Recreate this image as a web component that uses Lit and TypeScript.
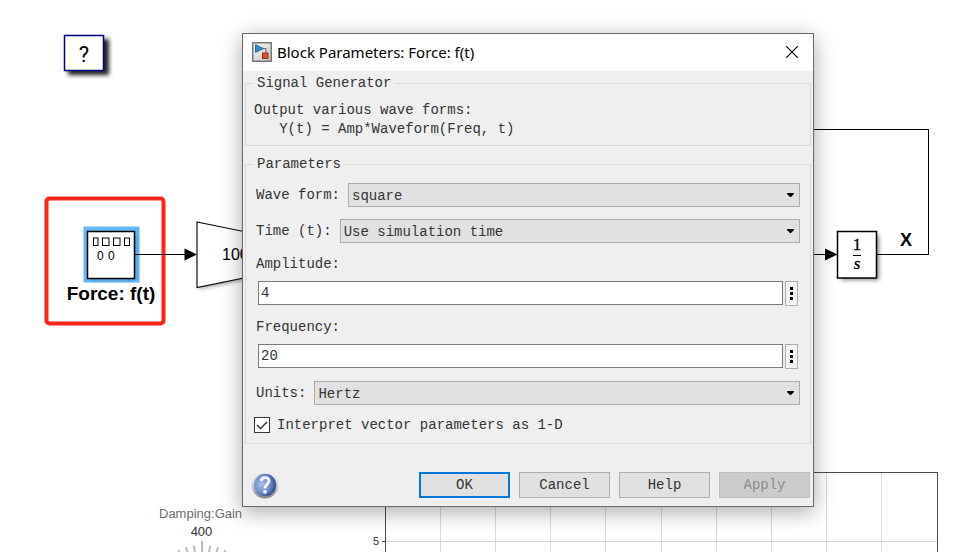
import { LitElement, html, svg, css } from "lit";
import { customElement, property } from "lit/decorators.js";

const GRID_X = [440, 495, 550, 605, 661, 716, 771, 826, 881];
const DIAL_ANGLES = [-24, -16, -8, 0, 8, 16, 24];

@customElement("model-canvas")
class ModelCanvas extends LitElement {
  static styles = css`
    :host {
      display: block;
      overflow: hidden;
    }
    .model {
      display: block;
      width: 100%;
      height: 100%;
      overflow: visible;
      font-family: "Liberation Sans", sans-serif;
    }
    .block {
      fill: #fff;
      stroke: #000;
      stroke-width: 1.5;
    }
    .thin {
      stroke-width: 1.1;
    }
    .wire {
      fill: none;
      stroke: #000;
      stroke-width: 1;
      shape-rendering: crispEdges;
    }
    .glyph {
      fill: none;
      stroke: #000;
      stroke-width: 1;
    }
    .doc {
      fill: #fff;
      stroke: #000080;
      stroke-width: 1.5;
    }
    .selected {
      fill: #63b8f7;
    }
    .callout {
      fill: none;
      stroke: #ff2419;
      stroke-width: 4;
    }
    .name {
      font-size: 18px;
      font-weight: bold;
    }
    .block-name {
      font-size: 19px;
    }
    .query {
      font-size: 22px;
      font-family: Roboto, "Liberation Sans", sans-serif;
    }
    .gain {
      font-size: 16px;
    }
    .zeros {
      font-size: 12px;
    }
    .serif {
      font-family: "Liberation Serif", serif;
      font-size: 17px;
      stroke: #000;
      stroke-width: 0.3;
    }
    .italic {
      font-style: italic;
    }
    .axis {
      fill: none;
      stroke: #4c4c4c;
      shape-rendering: crispEdges;
    }
    .grid {
      stroke: #d9d9d9;
      shape-rendering: crispEdges;
    }
    .tick-text {
      font-size: 11px;
      fill: #333;
    }
    .dial-title {
      font-size: 13px;
      fill: #6e6e6e;
    }
    .dial-value {
      font-size: 13px;
      fill: #333;
    }
    .dial-tick {
      stroke: #bcbcbc;
      stroke-width: 2;
    }
  `;

  render() {
    return html`
      <svg class="model" role="img" aria-label="Simulink model">
        <defs>
          <filter id="blur" x="-30%" y="-30%" width="160%" height="160%">
            <feGaussianBlur stdDeviation="2" />
          </filter>
        </defs>
        <rect x="68" y="39" width="41" height="36" fill="#222" filter="url(#blur)" />
        <rect class="doc" x="64.5" y="35.5" width="39" height="35" />
        <text class="query" x="84" y="62" text-anchor="middle">?</text>

        <rect class="callout" x="46.5" y="198.5" width="117" height="125" rx="3" />
        <rect class="selected" x="83.5" y="226.5" width="56" height="56" />
        <rect x="91" y="235" width="45" height="45" fill="#2b6ea8" opacity="0.5" filter="url(#blur)" />
        <rect class="block" x="87.5" y="231.5" width="47" height="47" />
        <rect class="glyph" x="93.5" y="238" width="4.5" height="7.5" />
        <rect class="glyph" x="102.5" y="238" width="6.5" height="7.5" />
        <rect class="glyph" x="113.5" y="238" width="6.5" height="7.5" />
        <rect class="glyph" x="124.5" y="238" width="5" height="7.5" />
        <text class="zeros" x="97" y="260">0</text>
        <text class="zeros" x="108" y="260">0</text>
        <text class="name block-name" x="111" y="300" text-anchor="middle">Force: f(t)</text>
        <path class="wire" d="M135 254.5H190" />
        <path d="M184.5 248.5L197 254.5L184.5 260.5Z" />

        <path d="M199 226L268 240V275L199 289Z" fill="#555" opacity="0.6" filter="url(#blur)" />
        <path class="block thin" d="M197 222L266 236V273.500L197 287.500Z" />
        <text class="gain" x="222" y="260">100</text>

        <path class="wire" d="M813 254.500H830" />
        <path d="M825 248.500L837.500 254.500L825 260.500Z" />
        <rect x="841" y="235" width="38" height="45" fill="#333" opacity="0.6" filter="url(#blur)" />
        <rect class="block" x="837.5" y="231.5" width="39" height="46.5" />
        <text class="serif" x="857" y="250" text-anchor="middle">1</text>
        <path class="wire" d="M853 255.500H861" />
        <text class="serif italic" x="857" y="269" text-anchor="middle">s</text>
        <path class="wire" d="M877 254.500H928.500V129.500H813" />
        <text class="name" x="906" y="246" text-anchor="middle">X</text>

        ${GRID_X.map((x) => svg`<path class="grid" d="M${x + 0.5} 473V600" />`)}
        <path class="grid" d="M386 541.5H937" />
        <path class="axis" d="M382 541.500H385M385.500 600V472.500H937.500V600" />
        <text class="tick-text" x="379" y="545" text-anchor="end">5</text>

        <text class="dial-title" x="159" y="518">Damping:Gain</text>
        <text class="dial-value" x="201.5" y="536" text-anchor="middle">400</text>
        ${DIAL_ANGLES.map(
          (a) => svg`<path class="dial-tick" transform="rotate(${a} 202 603)"
            d="M202 ${a === 0 ? 541 : 545}V553" />`
        )}
      </svg>
    `;
  }
}

@customElement("block-dialog")
class BlockDialog extends LitElement {
  @property() heading = "Block Parameters: Force: f(t)";

  static styles = css`
    :host {
      display: block;
      box-sizing: border-box;
      border: 1px solid #6a6a6c;
      background: #efefef;
      box-shadow: 0 5px 20px rgba(0, 0, 0, 0.34);
      font: 14px/18px "Liberation Mono", monospace;
      color: #333;
    }
    * {
      box-sizing: border-box;
    }
    button,
    input,
    select {
      font: inherit;
      color: inherit;
      margin: 0;
      border-radius: 0;
      appearance: none;
    }
    .titlebar {
      display: flex;
      align-items: center;
      gap: 5px;
      height: 37px;
      padding: 0 9px 2px;
      background: #fff;
      color: #000;
    }
    .title {
      flex: 1;
      margin: 0;
      font: 15px/20px "Noto Sans", sans-serif;
    }
    .close {
      display: grid;
      place-items: center;
      width: 24px;
      height: 24px;
      padding: 0;
      border: 0;
      background: none;
    }
    .group {
      min-width: 0;
      margin: 4px 2px 0;
      padding: 0;
      border: 1px solid #dadada;
    }
    .group + .group {
      margin-top: 10px;
    }
    .legend {
      margin-left: 7px;
      padding: 0 4px;
      line-height: 16px;
    }
    .description {
      margin: 0;
      padding: 10px 8px 6px;
      font: inherit;
      line-height: 19px;
    }
    .fields {
      display: flex;
      flex-direction: column;
      gap: 12px;
      padding: 11px 10px 10px;
    }
    .row {
      display: flex;
      align-items: center;
      gap: 8px;
    }
    .combo {
      position: relative;
      display: flex;
      flex: 1;
    }
    .select {
      flex: 1;
      height: 24px;
      padding: 1px 20px 0 3px;
      border: 1px solid #adadad;
      background: #e1e1e1;
    }
    .arrow {
      position: absolute;
      top: 10px;
      right: 6px;
      pointer-events: none;
    }
    .stack {
      display: flex;
      flex-direction: column;
      gap: 8px;
    }
    .edit {
      display: flex;
      align-items: flex-start;
      gap: 2px;
      padding: 0 2px;
    }
    .input {
      flex: 1;
      min-width: 0;
      height: 24px;
      padding: 0 2px;
      border: 1px solid #7a7a7a;
      background: #fff;
    }
    .more {
      display: grid;
      place-items: center;
      width: 13px;
      height: 25px;
      padding: 0;
      border: 1px solid #adadad;
      background: #f4f4f4;
    }
    .check {
      display: flex;
      align-items: center;
      gap: 7px;
      height: 16px;
      margin-left: -2px;
    }
    .checkbox {
      display: grid;
    }
    .box {
      grid-area: 1 / 1;
      width: 16px;
      height: 16px;
      border: 1px solid #333;
      background: #fff;
    }
    .tick {
      grid-area: 1 / 1;
      pointer-events: none;
      visibility: hidden;
    }
    .box:checked + .tick {
      visibility: visible;
    }
    .footer {
      display: flex;
      align-items: center;
      gap: 9px;
      padding: 27px 3px 7px 8px;
    }
    .help {
      width: 28px;
      height: 28px;
      margin-right: auto;
      padding: 0;
      border: 0;
      background: none;
    }
    .button {
      width: 91px;
      height: 26px;
      padding: 0;
      border: 1px solid #adadad;
      background: #e1e1e1;
    }
    .primary {
      border: 2px solid #0078d7;
    }
    .button:disabled {
      border-color: #bfbfbf;
      background: #ccc;
      color: #8a8a8a;
    }
  `;

  private combo(id: string, label: string, value: string) {
    return html`
      <div class="row">
        <label for=${id}>${label}</label>
        <span class="combo">
          <select class="select" id=${id}>
            <option>${value}</option>
          </select>
          <svg class="arrow" width="7" height="4" viewBox="0 0 7 4">
            <path d="M0 0H7V1L4 4H3L0 1Z" />
          </svg>
        </span>
      </div>
    `;
  }

  private edit(id: string, label: string, value: string) {
    return html`
      <div class="stack">
        <label for=${id}>${label}</label>
        <div class="edit">
          <input class="input" id=${id} type="text" .value=${value} />
          <button class="more" aria-label="${label} actions">
            <svg width="3" height="13" viewBox="0 0 3 13">
              <path d="M0 0h3v3h-3zM0 5h3v3h-3zM0 10h3v3h-3z" />
            </svg>
          </button>
        </div>
      </div>
    `;
  }

  render() {
    return html`
      <header class="titlebar">
        <svg width="20" height="20" viewBox="0 0 20 20">
          <defs>
            <linearGradient id="tile" x1="0" y1="0" x2="1" y2="1">
              <stop offset="0" stop-color="#fafafa" />
              <stop offset="1" stop-color="#c4c4c4" />
            </linearGradient>
          </defs>
          <rect x=".75" y=".75" width="18.500" height="18.500" fill="url(#tile)" stroke="#777" stroke-width="1.500" />
          <path d="M11 6.500H14V11" fill="none" stroke="#777" stroke-width="1.200" />
          <path d="M3.500 2.500L11.500 6.500L3.500 10.500Z" fill="#2f8cc0" stroke="#1c6591" stroke-width=".8" />
          <rect x="10.500" y="11" width="5.500" height="5.500" fill="#d8532a" stroke="#9c2f10" />
        </svg>
        <h1 class="title">${this.heading}</h1>
        <button class="close" aria-label="Close">
          <svg width="12" height="12" viewBox="0 0 12 12">
            <path d="M0 0L12 12M12 0L0 12" fill="none" stroke="#000" stroke-width="1.100" />
          </svg>
        </button>
      </header>

      <fieldset class="group">
        <legend class="legend">Signal Generator</legend>
        <pre class="description">Output various wave forms:
   Y(t) = Amp*Waveform(Freq, t)</pre>
      </fieldset>

      <fieldset class="group">
        <legend class="legend">Parameters</legend>
        <div class="fields">
          ${this.combo("wave", "Wave form:", "square")}
          ${this.combo("time", "Time (t):", "Use simulation time")}
          ${this.edit("amplitude", "Amplitude:", "4")}
          ${this.edit("frequency", "Frequency:", "20")}
          ${this.combo("units", "Units:", "Hertz")}
          <div class="check">
            <span class="checkbox">
              <input class="box" id="vector" type="checkbox" checked />
              <svg class="tick" width="16" height="16" viewBox="0 0 16 16">
                <path d="M3 8L6.500 11.500L13 5" fill="none" stroke="#333" stroke-width="1.500" />
              </svg>
            </span>
            <label for="vector">Interpret vector parameters as 1-D</label>
          </div>
        </div>
      </fieldset>

      <footer class="footer">
        <button class="help" aria-label="About this block">
          <svg width="28" height="28" viewBox="0 0 28 28">
            <defs>
              <linearGradient id="ring" x1="0" y1="0" x2="0" y2="1">
                <stop offset="0" stop-color="#f0f0f0" />
                <stop offset=".5" stop-color="#d4d4d4" />
                <stop offset="1" stop-color="#858585" />
              </linearGradient>
              <radialGradient id="ball" cx=".35" cy=".45" r=".65">
                <stop offset="0" stop-color="#a9bfe6" />
                <stop offset=".6" stop-color="#6f8dc9" />
                <stop offset="1" stop-color="#2a4690" />
              </radialGradient>
            </defs>
            <circle cx="14" cy="14" r="13.500" fill="url(#ring)" />
            <circle cx="14" cy="14" r="11.200" fill="url(#ball)" />
            <path d="M10.300 10C10.300 5.500 18 5.500 18 9.800C18 13 14 13.200 14 17.500" fill="none" stroke="#f4f4f8" stroke-width="2.800" />
            <circle cx="14" cy="20.800" r="1.900" fill="#f4f4f8" />
          </svg>
        </button>
        <button class="button primary">OK</button>
        <button class="button">Cancel</button>
        <button class="button">Help</button>
        <button class="button" disabled>Apply</button>
      </footer>
    `;
  }
}

@customElement("app-root")
class AppRoot extends LitElement {
  static styles = css`
    :host {
      position: relative;
      display: block;
      min-height: 100vh;
      overflow: hidden;
      background: #fff;
    }
    .canvas {
      height: 100vh;
    }
    .dialog {
      position: absolute;
      left: 242px;
      top: 33px;
      width: 572px;
    }
  `;

  render() {
    return html`
      <model-canvas class="canvas"></model-canvas>
      <block-dialog class="dialog" role="dialog" aria-label="Block Parameters"></block-dialog>
    `;
  }
}
